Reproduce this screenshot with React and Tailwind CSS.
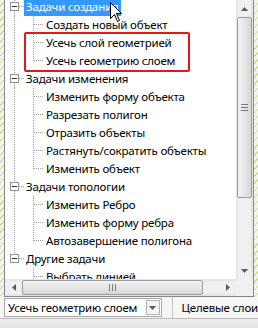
import React from "react";

const groups = [
  {
    title: "Задачи создания",
    selected: true,
    items: ["Создать новый объект", "Усечь слой геометрией", "Усечь геометрию слоем"],
  },
  {
    title: "Задачи изменения",
    items: [
      "Изменить форму объекта",
      "Разрезать полигон",
      "Отразить объекты",
      "Растянуть/сократить объекты",
      "Изменить объект",
    ],
  },
  {
    title: "Задачи топологии",
    items: ["Изменить Ребро", "Изменить форму ребра", "Автозавершение полигона"],
  },
  {
    title: "Другие задачи",
    items: ["Выбрать линией", "Выбрать полигоном"],
  },
];

const DOT = "#a0a0a0";

// tree connector for a group header row
function RootGutter({ lastGroup }) {
  return (
    <svg width="19" height="18" className="shrink-0" shapeRendering="crispEdges">
      <line x1="9.5" y1="0" x2="9.5" y2="4" stroke={DOT} strokeDasharray="1 1" />
      {!lastGroup && (
        <line x1="9.5" y1="13" x2="9.5" y2="18" stroke={DOT} strokeDasharray="1 1" />
      )}
      <rect x="5.5" y="4.5" width="8" height="8" fill="#fff" stroke="#919191" />
      <line x1="7" y1="8.5" x2="12" y2="8.5" stroke="#333" />
      <line x1="14" y1="8.5" x2="19" y2="8.5" stroke={DOT} strokeDasharray="1 1" />
    </svg>
  );
}

// tree connector for a child row
function ChildGutter({ rootLine, last }) {
  return (
    <svg width="40" height="18" className="shrink-0" shapeRendering="crispEdges">
      {rootLine && (
        <line x1="9.5" y1="0" x2="9.5" y2="18" stroke={DOT} strokeDasharray="1 1" />
      )}
      <line x1="28.5" y1="0" x2="28.5" y2={last ? 9 : 18} stroke={DOT} strokeDasharray="1 1" />
      <line x1="29" y1="8.5" x2="39" y2="8.5" stroke={DOT} strokeDasharray="1 1" />
    </svg>
  );
}

function Arrow({ dir }) {
  const pts = {
    up: "0,4 3.5,0 7,4",
    down: "0,0 3.5,4 7,0",
    left: "4,0 0,3.5 4,7",
    right: "0,0 4,3.5 0,7",
  }[dir];
  const vertical = dir === "up" || dir === "down";
  return (
    <svg width={vertical ? 7 : 4} height={vertical ? 4 : 7}>
      <polygon points={pts} fill="#5a5a5a" />
    </svg>
  );
}

function Grip({ vertical }) {
  return vertical ? (
    <svg width="7" height="7" shapeRendering="crispEdges">
      <line x1="0" y1="0.5" x2="7" y2="0.5" stroke="#7a7a7a" />
      <line x1="0" y1="3.5" x2="7" y2="3.5" stroke="#7a7a7a" />
      <line x1="0" y1="6.5" x2="7" y2="6.5" stroke="#7a7a7a" />
    </svg>
  ) : (
    <svg width="7" height="7" shapeRendering="crispEdges">
      <line x1="0.5" y1="0" x2="0.5" y2="7" stroke="#7a7a7a" />
      <line x1="3.5" y1="0" x2="3.5" y2="7" stroke="#7a7a7a" />
      <line x1="6.5" y1="0" x2="6.5" y2="7" stroke="#7a7a7a" />
    </svg>
  );
}

function TaskTree() {
  return (
    <div className="mt-[-2px] text-[11.5px] leading-[18px] tracking-[-0.2px] text-black">
      {groups.map((g, gi) => {
        const lastGroup = gi === groups.length - 1;
        return (
          <div key={g.title}>
            <div className="flex h-[18px] items-center">
              <RootGutter lastGroup={lastGroup} />
              <span
                className={
                  g.selected
                    ? "whitespace-nowrap bg-[#3399ff] px-[2px] text-white"
                    : "whitespace-nowrap px-[2px]"
                }
              >
                {g.title}
              </span>
            </div>
            {g.items.map((item, i) => (
              <div key={item} className="flex h-[18px] items-center">
                <ChildGutter rootLine={!lastGroup} last={i === g.items.length - 1} />
                <span className="whitespace-nowrap px-[1px]">{item}</span>
              </div>
            ))}
          </div>
        );
      })}
    </div>
  );
}

export default function App() {
  return (
    <div className="relative h-[328px] w-[258px] overflow-hidden bg-[repeating-linear-gradient(135deg,#f3f4ea_0px,#f3f4ea_4px,#cfd88e_4px,#cfd88e_5px)] font-['Noto_Sans',sans-serif]">
      {/* tree panel */}
      <div className="ml-[4px] grid h-[297px] w-[250px] grid-cols-[1fr_17px] grid-rows-[1fr_17px] border-x border-b border-[#828790] bg-white">
        <div className="overflow-hidden bg-white">
          <TaskTree />
        </div>

        {/* vertical scrollbar */}
        <div className="flex flex-col bg-[linear-gradient(90deg,#e3e3e3,#f0f0f0_20%,#f0f0f0_80%,#e3e3e3)]">
          <div className="flex h-[17px] items-center justify-center">
            <Arrow dir="up" />
          </div>
          <div className="flex-1 px-[1px]">
            <div className="flex h-[181px] items-center justify-center rounded-[2px] border border-[#9b9b9b] bg-[linear-gradient(90deg,#f4f4f4,#e6e6e6_50%,#d6d6d6)]">
              <Grip vertical />
            </div>
          </div>
          <div className="flex h-[17px] items-center justify-center">
            <Arrow dir="down" />
          </div>
        </div>

        {/* horizontal scrollbar */}
        <div className="flex bg-[linear-gradient(180deg,#e3e3e3,#f0f0f0_20%,#f0f0f0_80%,#e3e3e3)]">
          <div className="flex w-[17px] items-center justify-center">
            <Arrow dir="left" />
          </div>
          <div className="flex-1 py-[1px]">
            <div className="flex h-full w-[181px] items-center justify-center rounded-[2px] border border-[#9b9b9b] bg-[linear-gradient(180deg,#f4f4f4,#e6e6e6_50%,#d6d6d6)]">
              <Grip />
            </div>
          </div>
          <div className="flex w-[17px] items-center justify-center">
            <Arrow dir="right" />
          </div>
        </div>
        <div className="bg-[#f0f0f0]" />
      </div>

      {/* bottom toolbar */}
      <div className="flex h-[21px] items-start bg-[#f6f6f6] text-[11.5px] tracking-[-0.2px] text-black">
        <div className="ml-[4px] mt-[1px] flex h-[19px] w-[163px] items-center overflow-hidden border border-[#a7a7a7] bg-white">
          <span className="flex-1 overflow-hidden whitespace-nowrap pl-[3px]">Усечь геометрию слоем</span>
          <div className="mr-[1px] flex h-[15px] w-[14px] shrink-0 items-center justify-center border border-[#b5b5b5] bg-[#f4f4f4]">
            <Arrow dir="down" />
          </div>
        </div>
        <div className="ml-[10px] h-full w-px bg-[#c4c4c4]" />
        <span className="ml-[9px] mt-[2px] whitespace-nowrap">Целевые слои</span>
      </div>
      <div className="h-[10px] border-t border-[#b9b9b9] bg-[linear-gradient(180deg,#f0f0f0,#e2e2e2)]" />

      {/* red annotation frame */}
      <div className="absolute left-[24px] top-[32px] h-[40px] w-[166px] rounded-[2px] border-2 border-[#e8151d]" />

      {/* mouse cursor */}
      <svg className="absolute left-[110px] top-[2px]" width="13" height="21" viewBox="0 0 13 21">
        <path
          d="M0.5 0.5 L0.5 16.5 L4.5 12.5 L7.5 19.5 L9.5 18.5 L6.5 11.5 L11.5 11.5 Z"
          fill="#fff"
          stroke="#000"
          strokeLinejoin="round"
        />
      </svg>
    </div>
  );
}
